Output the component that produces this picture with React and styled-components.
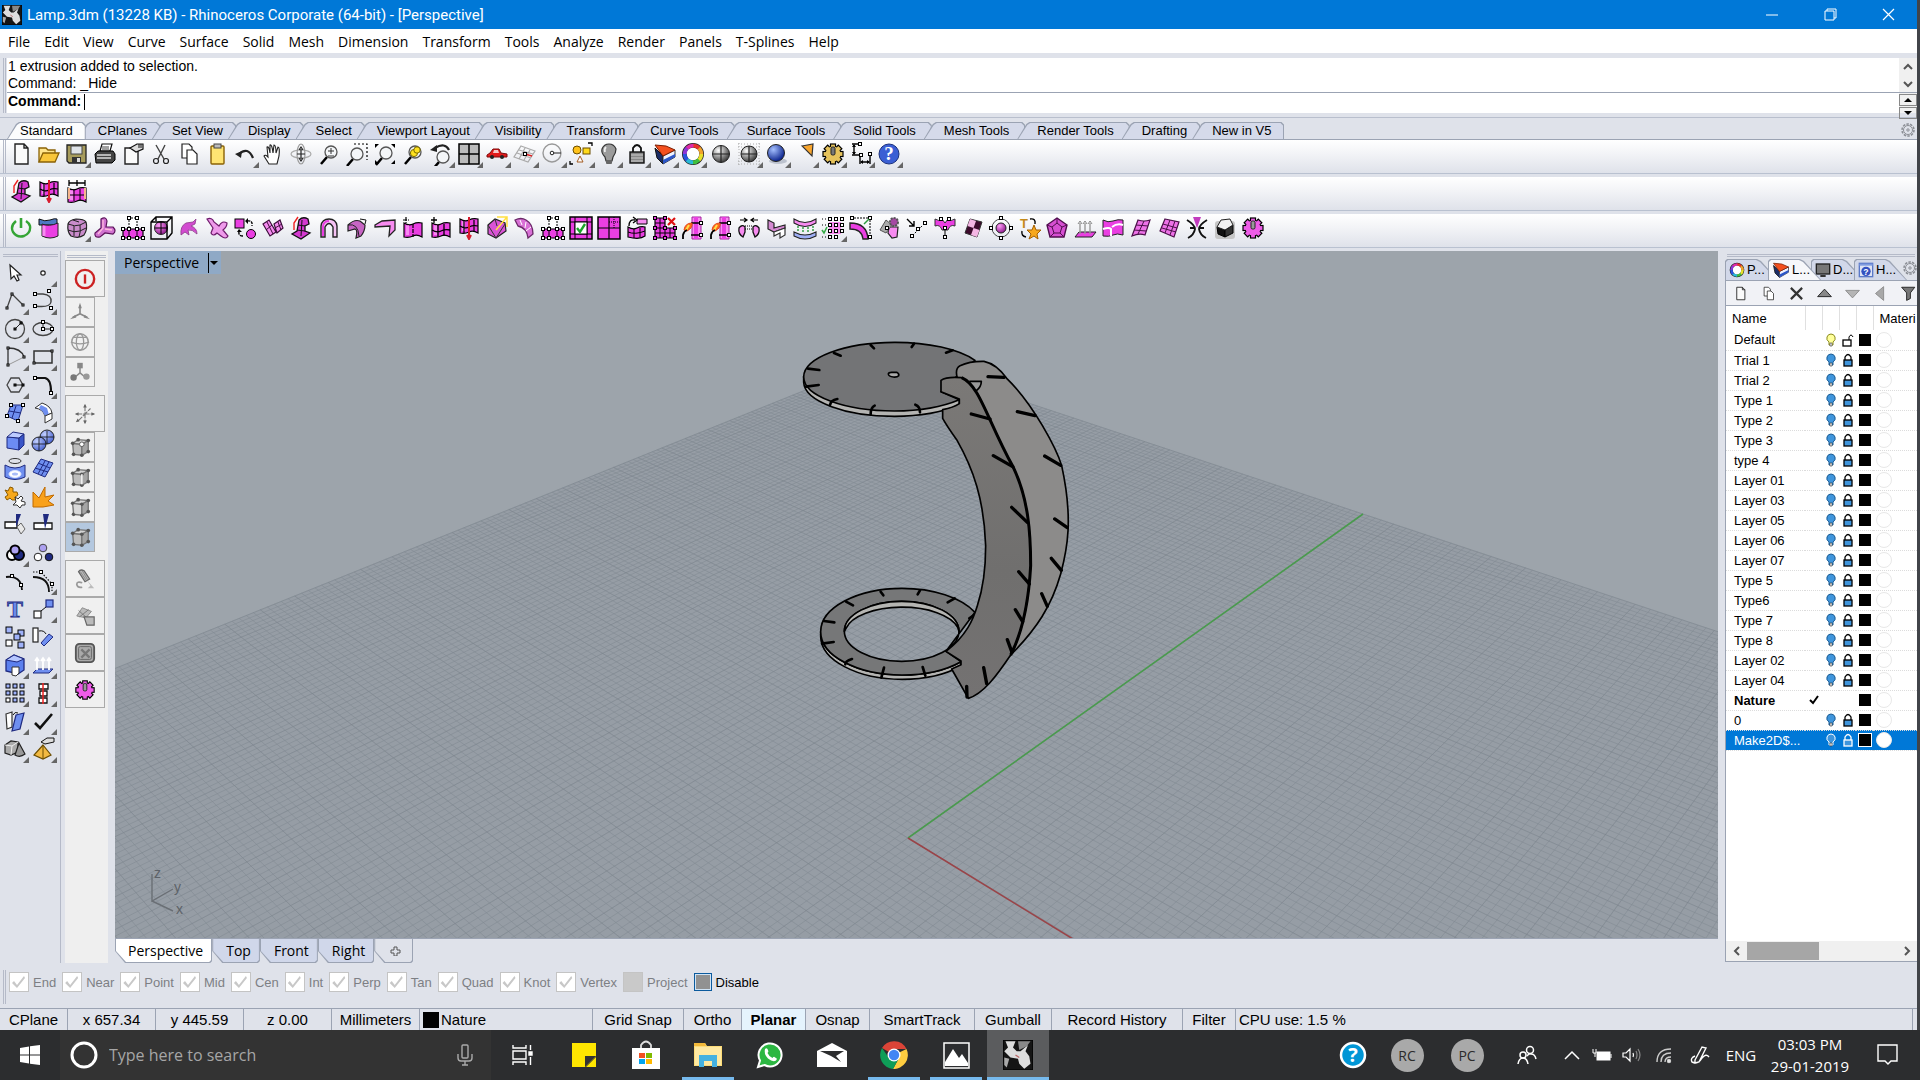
import React, { useState } from 'react';
import styled, { createGlobalStyle, css } from 'styled-components';

const GlobalStyle = createGlobalStyle`
  * { box-sizing: border-box; }
  body {
    margin: 0;
    background: #dfe2ea;
    font-family: "Liberation Sans", Arial, sans-serif;
    font-size: 13px;
    color: #000;
  }
  button, input { font: inherit; color: inherit; }
  button { border: 0; padding: 0; background: none; }
`;

const UI_FONT = '"Open Sans", "Segoe UI", sans-serif';
const LINE = '#9ba3b3';
const M = '#ea3fe2';
const ML = '#f78bf0';
const MD = '#a4219f';
const B = '#6f8ff0';
const BD = '#1f2a80';

/* ---------- icon helpers ---------- */

const dots = (list, fill = '#fff', s = 3) =>
  list.map(([x, y]) => (
    <rect key={x + '-' + y} x={x - s / 2} y={y - s / 2} width={s} height={s} fill={fill} stroke="#000" strokeWidth="1" />
  ));

const Gear = ({ fill, hub = '#999' }) => (
  <>
    {[0, 45, 90, 135].map((a) => (
      <rect key={a} x="9.5" y="2" width="5" height="20" fill={fill} stroke="#000" strokeWidth="1.2" transform={`rotate(${a} 12 12)`} />
    ))}
    <circle cx="12" cy="12" r="7.5" fill={fill} />
    <rect x="10" y="5" width="4" height="8" rx="1.5" fill={hub} stroke="#222" />
  </>
);

const Lens = ({ x = 14, y = 10 }) => (
  <>
    <path d={`M${x - 4} ${y + 5} L${x - 10} ${y + 12}`} stroke="#000" strokeWidth="2.5" />
    <circle cx={x} cy={y} r="6" fill="#f4f6f8" stroke="#555" strokeWidth="1.3" />
  </>
);

const Sphere = ({ x = 12, y = 12, r = 8.5, a = '#fff', b = '#333' }) => {
  const id = 'sp' + x + y + r + a.slice(1);
  return (
    <>
      <radialGradient id={id} cx=".35" cy=".3" r=".75">
        <stop offset="0" stopColor={a} />
        <stop offset="1" stopColor={b} />
      </radialGradient>
      <circle cx={x} cy={y} r={r} fill={`url(#${id})`} stroke="#222" />
    </>
  );
};

const Cage = ({ mark }) => (
  <>
    <path d="M4 8 L14 9 L14 21 L5 20Z" fill="#bdbdbd" stroke="#777" strokeWidth="1.5" />
    <path d="M4 8 L10 4 L21 5 L14 9Z" fill="#d5d5d5" stroke="#777" strokeWidth="1.5" />
    <path d="M14 9 L21 5 L21 17 L14 21Z" fill="#a5a5a5" stroke="#777" strokeWidth="1.5" />
    {[[4, 8], [14, 9], [14, 21], [5, 20], [10, 4], [21, 5], [21, 17]].map(([x, y]) => (
      <circle key={x * y} cx={x} cy={y} r="2" fill="#555" />
    ))}
    {mark === 'vertex' && <circle cx="14" cy="9" r="2.5" fill="#fff" stroke="#555" />}
    {mark === 'edge' && <path d="M14 9 V20" stroke="#eee" strokeWidth="2" />}
    {mark === 'face' && <path d="M5 9 L13 10 V20 L6 19Z" fill="#d8d8d8" />}
  </>
);

const Wall = ({ y = 6 }) => (
  <>
    <path d={`M3 ${y} Q8 ${y + 3} 12 ${y + 1} T21 ${y} V${y + 14} Q16 ${y + 11} 12 ${y + 13} T3 ${y + 14}Z`} fill={M} stroke="#000" strokeWidth="1.2" />
    <path d={`M5 ${y + 2} Q7 ${y + 3} 8 ${y + 2} V${y + 12} L5 ${y + 12}Z`} fill={ML} />
  </>
);

const icons = {
  /* standard toolbar */
  new: <path d="M6 2 H15 L19 6 V22 H6Z M15 2 V6 H19" fill="#fafafa" stroke="#222" strokeWidth="1.4" />,
  open: <><path d="M2 20 V6 H9 L11 8 H18 V11" fill="#ffe48a" stroke="#8a6206" strokeWidth="1.3" /><path d="M2 20 L6 11 H22 L18 20Z" fill="#f9c63a" stroke="#8a6206" strokeWidth="1.3" /></>,
  save: <><path d="M2 3 H21 V21 H4 L2 19Z" fill="#a79c5c" stroke="#222" strokeWidth="1.3" /><rect x="6" y="4" width="11" height="8" fill="#dfe3e8" stroke="#444" /><rect x="7" y="15" width="9" height="6" fill="#333" /><rect x="12" y="16" width="3" height="4" fill="#ddd" /></>,
  print: <><path d="M7 9 L9 2 H19 L17 9Z" fill="#fff" stroke="#111" strokeWidth="1.2" /><path d="M9 5 H16 M9 7 H16" stroke="#444" /><path d="M2 12 L5 9 H20 L22 12 V18 L19 21 H3Z" fill="#444" stroke="#000" /><path d="M4 13 H18 M4 16 H18" stroke="#ddd" strokeWidth="1.4" /></>,
  note: <><path d="M4 6 H17 V22 H4Z" fill="#fafafa" stroke="#222" strokeWidth="1.4" /><path d="M9 6 L16 2 H22 V7 L15 10Z" fill="#ddd" stroke="#111" strokeWidth="1.2" /><path d="M18 2 V6 M20 2 V6" stroke="#111" /></>,
  cut: <><path d="M7 3 L15 17 M16 3 L9 17" stroke="#444" strokeWidth="1.4" /><circle cx="7" cy="19" r="2.5" fill="none" stroke="#222" strokeWidth="1.2" /><circle cx="17" cy="19" r="2.5" fill="none" stroke="#222" strokeWidth="1.2" /></>,
  copy: <><path d="M5 2 H12 L15 5 V16 H5Z" fill="#fff" stroke="#222" strokeWidth="1.2" /><path d="M10 8 H16 L20 12 V22 H10Z" fill="#fff" stroke="#222" strokeWidth="1.2" /></>,
  paste: <><rect x="6" y="4" width="13" height="18" rx="1" fill="#ffe472" stroke="#8a6206" strokeWidth="1.4" /><rect x="9" y="2" width="7" height="4" fill="#bbb" stroke="#444" /></>,
  undo: <><path d="M6 12 Q15 4 20 16" fill="none" stroke="#222" strokeWidth="2.2" /><path d="M2 12 L9 9 L8 16Z" fill="#222" /></>,
  hand: <path d="M8 22 L3 14 Q4 12 7 15 L6 5 Q8 4 9 11 L9 3 Q11 2 12 11 L13 3 Q15 3 15 11 L17 5 Q19 5 18 14 L16 22Z" fill="#fff" stroke="#222" strokeWidth="1.1" />,
  orbit: <><ellipse cx="12" cy="12" rx="10" ry="4" fill="none" stroke="#aaa" strokeWidth="1.2" /><ellipse cx="12" cy="12" rx="4" ry="10" fill="none" stroke="#999" strokeWidth="1.2" /><path d="M12 7 V17 M8 12 H16 M10 8 L12 5 L14 8 M10 16 L12 19 L14 16" stroke="#222" fill="none" strokeWidth="1.2" /></>,
  zoom: <><Lens /><path d="M11 9 H17 M14 6 V12 M11 14 H17" stroke="#333" /></>,
  zoomWin: <><Lens x={12} y={12} /><path d="M9 2 H22 V18" stroke="#000" fill="none" strokeDasharray="2 2" strokeWidth="1.2" /></>,
  zoomExt: <><Lens x={13} y={11} /><path d="M2 6 V2 H6Z M18 2 H22 V6Z M22 18 V22 H18Z M2 18 V22 H6Z" fill="#000" /></>,
  zoomSel: <><Lens /><circle cx="13" cy="11" r="3.6" fill="#ffe21f" stroke="#7a6a00" /><circle cx="16" cy="8" r="3.2" fill="#ffe21f" stroke="#7a6a00" /></>,
  undoView: <><Lens x={14} y={15} /><path d="M6 6 Q16 0 20 8" fill="none" stroke="#222" strokeWidth="2.2" /><path d="M1 8 L8 3 L8 10Z" fill="#222" /></>,
  views: <><rect x="2" y="2" width="20" height="20" fill="#bbb" stroke="#000" strokeWidth="1.5" /><path d="M12 2 V22 M2 12 H22" stroke="#000" strokeWidth="1.5" /></>,
  car: <><path d="M2 13 L5 11 L8 7 H14 L16 11 L22 12 V15 H2Z" fill="#e31b1b" stroke="#7d0b0b" /><path d="M9 8 H13 L14 11 H8Z" fill="#f6c9c9" /><circle cx="7" cy="15" r="2" fill="#222" /><circle cx="17" cy="15" r="2" fill="#222" /></>,
  cplane: <><path d="M8 4 L22 9 L15 20 L1 15Z M6 8 L20 12 M4 11 L18 16 M12 6 L6 17 M17 8 L11 18" fill="none" stroke="#aaa" strokeWidth="1.2" /><path d="M12 12 L19 14" stroke="#d22" strokeWidth="1.5" />{dots([[12, 12]])}</>,
  circleTool: <><circle cx="11" cy="11" r="9" fill="none" stroke="#999" strokeWidth="1.4" /><path d="M12 11 H20" stroke="#222" /><circle cx="11" cy="11" r="1.8" fill="#fff" stroke="#222" /></>,
  shapes: <><circle cx="8" cy="8" r="4" fill="#ffc21a" stroke="#6b4d00" /><rect x="14" y="6" width="7" height="6" fill="#ffd91a" stroke="#6b4d00" /><path d="M8 20 L11 14 L14 20Z" fill="#fff" stroke="#a35b22" /><path d="M19 1 H23 V4 M1 19 V22 H4" stroke="#000" fill="none" strokeWidth="1.3" /></>,
  bulb: <><path d="M8 15 Q4 11 5 7 Q7 2 12 2 Q17 2 19 7 Q19 11 16 15 L15 19 H9Z" fill="#9b9b9b" stroke="#333" strokeWidth="1.2" /><path d="M9 5 Q7 7 8 10" stroke="#eee" strokeWidth="1.8" fill="none" /><rect x="9" y="18" width="6" height="4" rx="1" fill="#666" /></>,
  lock: <><path d="M8 11 V6 Q12 0 16 6 V11" fill="none" stroke="#111" strokeWidth="1.8" /><rect x="5" y="10" width="14" height="11" fill="#888" stroke="#111" strokeWidth="1.4" /><path d="M6 13 H18 M6 16 H18 M6 19 H18" stroke="#ccc" /></>,
  layers: <><path d="M2 6 L10 14 V22 L4 16Z" fill="#1b2c66" stroke="#111" /><path d="M10 14 L22 8 V15 L10 22Z" fill="#eef2ff" stroke="#333" /><path d="M10 18 L22 12 V15 L10 22Z" fill="#2c56c8" /><path d="M2 3 L13 4 L22 8 L10 14Z" fill="#f4501e" stroke="#7d1d00" /></>,
  wheel: <><circle cx="12" cy="12" r="8.5" fill="none" stroke="#222" strokeWidth="5" />{['#e8322a', '#f2a32a', '#e8e02a', '#3fbf3f', '#28b9d8', '#2a52e0', '#8b35d8', '#e02aa8'].map((c, i) => <path key={c} d="M12 3.7 A8.300 8.300 0 0 1 18.2 6.4" fill="none" stroke={c} strokeWidth="3.8" transform={`rotate(${i * 45} 12 12)`} />)}<circle cx="12" cy="12" r="6.2" fill="#fff" /></>,
  sphere: <><Sphere /><path d="M12 3.5 V20.5 M3.5 12 H20.5" stroke="#222" strokeWidth="1.2" /></>,
  sphereGrid: <><path d="M1 2 H23 M1 5 H23 M1 19 H23 M1 22 H23 M2 1 V23 M22 1 V23" stroke="#aaa" strokeDasharray="1 2" /><Sphere r={8} /><path d="M12 4 V20 M4 12 H20" stroke="#222" strokeWidth="1.2" /></>,
  blueSphere: <><ellipse cx="13" cy="19" rx="9" ry="3" fill="#bcc2ce" /><Sphere a="#a4bfff" b="#021a86" x={11} y={11} /></>,
  spot: <path d="M9 4 L20 2 L19 14 Z" fill="#f8a52d" stroke="#333" strokeWidth="1.2" />,
  gearGold: <Gear fill="#e6c35c" hub="#777" />,
  dims: <><path d="M3 2 H11 M3 13 H11 M5 3 V12 M11 13 V22 M21 11 V22 M12 20 H20" stroke="#000" fill="none" strokeWidth="1.4" /><path d="M3 5 L5 2 L7 5Z M3 10 L5 13 L7 10Z M14 18 L11 20 L14 22Z M18 18 L21 20 L18 22Z" fill="#000" />{dots([[11, 2], [12, 13], [21, 12]])}</>,
  help: <><circle cx="12" cy="12" r="10" fill="#3b5fd4" stroke="#1c327e" /><text x="12" y="18" textAnchor="middle" fill="#fff" fontSize="19" fontWeight="700" fontFamily="Liberation Serif, serif">?</text></>,

  /* modelling toolbar */
  power: <><path d="M7 5 Q1 10 4 16 Q8 22 15 20 Q22 17 21 10 Q20 7 17 5" fill="none" stroke="#35a535" strokeWidth="2.4" /><path d="M12 2 V12" stroke="#35a535" strokeWidth="2.6" /></>,
  cylBox: <><path d="M2 3 Q8 6 13 4 T20 3 V9 H2Z" fill="#4d79c4" stroke="#111" /><path d="M5 8 Q12 11 21 7 V20 Q13 24 5 20Z" fill={M} stroke="#222" /><path d="M7 10 V20" stroke={ML} strokeWidth="3" /></>,
  subd: <><path d="M3 8 Q4 4 11 3 Q19 3 21 6 Q23 13 19 19 Q14 23 6 20 Q2 16 3 8Z" fill="#c98ccb" stroke="#222" strokeWidth="1.2" /><path d="M3 8 Q10 11 15 9 L21 6 M15 9 Q16 16 14 21 M9 10 V20 M3 14 Q9 17 15 15 L21 12 M8 4 L14 6" fill="none" stroke="#222" /></>,
  tri: <><path d="M8 3 Q13 0 14 5 L13 11 L20 11 Q24 15 20 18 L12 17 L7 21 Q1 22 2 17 L8 12Z" fill="#d072cf" stroke="#5c125a" strokeWidth="1.2" /><path d="M10 4 L10 12 L5 18 M12 13 L19 14" stroke="#fbd" strokeWidth="1.3" fill="none" /></>,
  extrude: <><path d="M8 12 V2 H16 V12" stroke="#000" fill="#fff" strokeDasharray="2 1" /><path d="M2 13 H22 V22 H2Z" fill={M} stroke="#000" strokeWidth="1.2" /><path d="M8 13 V22 M16 13 V22" stroke="#000" />{dots([[8, 2], [16, 2], [2, 13], [8, 13], [16, 13], [22, 13], [2, 22], [8, 22], [16, 22], [22, 22]])}</>,
  bbox: <><Sphere r={6.5} a="#ff9df8" b="#8a1588" /><path d="M2 6 L7 1 H23 V17 L18 23 H2Z M2 6 H18 V23 M18 6 L23 1 M7 1 V5" fill="none" stroke="#000" strokeWidth="1.4" /><path d="M6 12 H18 M12 6 V18" stroke="#000" /></>,
  curl: <path d="M4 19 Q3 10 9 7 L16 6 L19 3 L18 8 L14 10 Q20 12 20 18 Q15 13 11 14 L12 19 L8 16Z" fill="#d24bd0" stroke="#8b3a89" strokeWidth=".8" />,
  ypipe: <path d="M2 3 Q7 1 9 6 L14 10 Q17 4 22 7 Q22 11 18 14 L23 20 Q21 24 16 20 L12 17 Q8 21 6 17 L8 12Z" fill="#ee9aea" stroke="#6e1a6c" strokeWidth="1.2" />,
  swap: <><rect x="2" y="3" width="9" height="9" fill={M} stroke="#000" /><circle cx="18" cy="18" r="4.5" fill={M} stroke="#000" /><path d="M14 5 Q20 4 19 10 M10 20 Q5 20 6 15" fill="none" stroke="#000" strokeWidth="1.4" strokeDasharray="3 1" /><path d="M15 2 L12 5 L15 8Z M4 16 L6 13 L9 16Z" fill="#000" /></>,
  quads: <><path d="M2 8 L8 4 L15 16 L9 20Z M13 8 L19 4 L22 12 L16 17Z" fill={ML} stroke="#3c0f3b" strokeWidth="1.2" /><path d="M5 14 L11 9 M6 6 L12 18 M17 6 L20 14 M14 12 L21 8" stroke="#3c0f3b" /></>,
  bendL: <><path d="M10 4 Q14 0 19 3 L20 8 L16 10 L16 15 L21 17 L12 23 L3 18 L8 15Z" fill="#d43ad0" stroke="#111" strokeWidth="1.3" /><path d="M13 4 L12 20 M9 9 L16 10 M8 14 L16 15" stroke="#111" /><path d="M5 14 V7 L9 1" fill="none" stroke="#e22" strokeWidth="1.4" /></>,
  arch: <><path d="M4 21 V10 Q5 3 12 3 Q19 3 20 10 V21 H16 V11 Q12 4 8 11 V21Z" fill="#f5c2f3" stroke="#222" strokeWidth="1.4" /><path d="M6 20 V10 Q7 5 12 5" fill="none" stroke={M} strokeWidth="2" /></>,
  bend: <><path d="M3 9 Q9 3 15 5 L20 9 Q20 15 16 20 L11 22 Q13 14 10 13 L3 15Z" fill="#c765c4" stroke="#222" strokeWidth="1.2" /><path d="M3 9 Q13 7 14 20" fill="none" stroke="#222" /><path d="M15 3 L21 4 L20 8" stroke="#111" fill="none" /></>,
  flat: <path d="M2 9 L9 5 L22 4 V14 L16 20 L17 10 L2 11Z" fill={ML} stroke="#222" strokeWidth="1.3" />,
  insert: <><Wall y={7} /><path d="M5 1 V7 M2 4 H8 M12 8 V21" stroke="#000" strokeDasharray="4 1" strokeWidth="1.2" /></>,
  insertEdge: <><Wall y={7} /><path d="M5 1 V7 M2 4 H8 M9 9 V21 M15 8 V20 M3 14 Q8 17 12 15 T21 14" fill="none" stroke="#000" strokeWidth="1.3" /></>,
  slice: <><Wall y={3} /><path d="M7 4 V17 M17 4 V16 M3 10 Q8 13 12 11 T21 10" fill="none" stroke="#000" strokeWidth="1.2" /><path d="M12 1 V23 M10 19 L12 23 L14 19" stroke="#d71c2e" strokeWidth="2" fill="none" /></>,
  crease: <><path d="M3 9 L10 3 L20 7 L21 15 L11 22 L3 18Z" fill="#d953d5" stroke="#222" strokeWidth="1.2" /><path d="M3 9 L11 22 L20 8 M10 3 L12 10" fill="none" stroke="#333" /><path d="M12 1 H22 V11 M11 14 L22 1" fill="none" stroke="#ffe040" strokeWidth="1.5" /></>,
  uncrease: <><path d="M2 4 Q8 1 13 4 Q20 8 20 18 L15 22 Q14 12 5 10Z" fill="#d970d6" stroke="#6a2a68" strokeWidth="1.3" /><path d="M7 4 L9 9 M13 6 L12 12 M18 11 L13 15" stroke="#fff" /></>,
  check: <><rect x="1" y="1" width="22" height="22" fill={M} stroke="#000" strokeWidth="1.5" /><path d="M1 6 H23 M1 18 H23 M6 1 V23 M18 1 V23" stroke="#000" /><rect x="6" y="6" width="12" height="12" fill="#fff" stroke="#000" /><path d="M8 12 L11 16 L16 8" fill="none" stroke="#1ba52b" strokeWidth="2.4" /></>,
  fourBox: <><rect x="1" y="1" width="22" height="22" fill={M} stroke="#000" strokeWidth="1.5" /><path d="M12 1 V23 M1 12 H23" stroke="#000" strokeWidth="1.2" /><path d="M17 1 V12 M12 6 H23" stroke="#000" strokeDasharray="1 1" /></>,
  weld: <><path d="M3 11 Q8 14 12 12 T20 11 V20 Q15 24 3 21Z" fill={M} stroke="#000" strokeWidth="1.2" /><path d="M3 16 Q10 19 20 15 M9 13 V22 M15 12 V21" fill="none" stroke="#000" /><path d="M12 3 H22 V8 H12Z" fill={ML} stroke="#000" /><path d="M4 10 Q4 3 10 4 M8 1 L12 4 L8 7" fill="none" stroke="#000" strokeWidth="1.3" /></>,
  remove: <><path d="M2 2 H12 V12 H22 V22 H2Z" fill={M} stroke="#000" strokeWidth="1.2" /><path d="M7 2 V22 M2 7 H12 M2 12 H12 V22 M17 12 V22 M2 17 H22" stroke="#000" fill="none" />{dots([[2, 2], [12, 2], [2, 12], [12, 12], [22, 12], [2, 22], [12, 22], [22, 22]], M)}<path d="M15 2 L22 9 M22 2 L15 9" stroke="#d11" strokeWidth="2.2" /></>,
  flame: <><path d="M11 1 H20 V23 H11Z" fill={ML} stroke={MD} /><path d="M15 1 V23" stroke={M} strokeWidth="4" /><path d="M10 7 H21 M10 19 H21" stroke="#000" strokeWidth="1.6" />{dots([[20, 7], [20, 19]])}<path d="M3 14 Q4 7 11 7 Q12 12 6 15Z" fill="#ff6a1a" stroke="#e4481b" /><path d="M8 9 L5 14" stroke="#ffe04a" strokeWidth="2" /><path d="M2 23 V19 Q3 15 6 14" stroke="#000" fill="none" strokeWidth="1.8" /></>,
  bridge: <><path d="M2 12 Q5 8 8 11 V16 L6 21 Q1 18 2 12Z M22 12 Q19 8 16 11 V16 L18 21 Q23 18 22 12Z" fill={ML} stroke="#111" strokeWidth="1.3" /><path d="M8 10 H16 M8 13 H16" stroke="#000" strokeDasharray="1 1" /><path d="M3 4 H9 M7 2 L10 4 L7 6 M21 4 H15 M17 2 L14 4 L17 6" fill="none" stroke="#000" strokeWidth="1.2" /></>,
  chair: <><path d="M3 4 L9 7 V12 L20 9 L20 12 L9 16 L3 13Z" fill="#d58ad2" stroke="#222" strokeWidth="1.2" /><path d="M9 16 L20 12 V19 L15 22 V17 L9 20Z" fill="#fff" stroke="#333" strokeWidth="1.2" /></>,
  merge: <><path d="M1 3 Q12 10 23 3 V7 Q12 14 1 7Z" fill={ML} stroke="#222" strokeWidth="1.1" /><path d="M1 16 Q12 22 23 16 V20 Q12 26 1 20Z" fill="#9fb0f5" stroke="#222" strokeWidth="1.1" /><path d="M5 10 V16 M10 11 V17 M15 11 V17 M20 10 V16" stroke="#2a9a3b" strokeWidth="1.4" strokeDasharray="2 1" /></>,
  dotGrid: <><rect x="8" y="6" width="12" height="12" fill={ML} />{dots([[9, 3], [15, 3], [21, 3], [9, 9], [15, 9], [21, 9], [9, 15], [15, 15], [21, 15], [9, 21], [15, 21]])}<path d="M1 3 H5 M1 9 H5 M1 21 H5" stroke="#000" strokeDasharray="1 2" /><path d="M1 14 L3 17 L6 11" fill="none" stroke="#3a4" strokeWidth="1.6" /></>,
  quarter: <><path d="M1 7 Q18 7 19 23 H14 Q13 13 1 13Z" fill={M} stroke="#222" strokeWidth="1.4" /><path d="M2 2 H21 V21" stroke="#000" fill="none" strokeDasharray="2 1" />{dots([[3, 2], [21, 2], [21, 21]])}<path d="M15 8 L20 3" stroke="#2a9a3b" strokeWidth="1.4" /></>,
  gearQuad: <><path d="M12 11 H21 L20 21 L15 22 L11 17Z" fill={ML} stroke="#222" strokeWidth="1.2" /><path d="M3 14 L9 4 L15 9 L9 17Z" fill="#aaa" stroke="#555" /><circle cx="17" cy="6" r="4" fill="#a648a4" stroke="#555" strokeDasharray="2 1" strokeWidth="2" />{dots([[10, 12]])}</>,
  arrowPts: <><path d="M2 3 L9 10 M9 5 V10 H4" stroke="#000" fill="none" strokeWidth="1.4" /><path d="M7 20 L20 7" stroke="#000" strokeDasharray="2 2" />{dots([[20, 7], [13, 13], [7, 20]])}</>,
  symm: <><path d="M2 3 Q6 6 9 3 L12 7 L15 3 Q18 6 22 3 V10 Q17 8 15 14 H9 Q7 8 2 10Z" fill={M} stroke="#333" /><path d="M12 14 V22" stroke="#000" />{dots([[8, 3], [16, 3], [12, 12], [12, 21]])}</>,
  checker: <><path d="M9 3 L21 6 L16 21 L4 17Z" fill="#3d0b2c" stroke="#333" /><path d="M9 3 L15 5 L12.500 12 L6.500 10Z M18.500 14 L16 21 L10 19 L12.500 12Z" fill="#f4b6e3" /></>,
  spherePts: <><circle cx="12" cy="12" r="9" fill="none" stroke="#444" /><Sphere r={5} a="#ff9df8" b="#8a1588" />{dots([[12, 2], [12, 22], [2, 12], [22, 12]])}</>,
  tStar: <><text x="7" y="12" textAnchor="middle" fill="#c48a1a" fontSize="13" fontWeight="700">T</text><path d="M17 9 L19 14 L24 14 L20 18 L21 23 L17 20 L12 23 L14 18 L10 14 L15 14Z" fill="#f7a81d" stroke="#a35f00" /><path d="M13 3 Q19 2 18 8 M9 21 Q4 20 5 15" stroke="#000" fill="none" strokeWidth="1.4" /></>,
  penta: <><path d="M12 2 L22 9 L19 21 H5 L2 9Z" fill="#d64fd2" stroke="#500e4e" strokeWidth="1.4" /><path d="M12 7 L17 11 L15 17 H9 L7 11Z M12 2 V7 M22 9 L17 11 M19 21 L15 17 M5 21 L9 17 M2 9 L7 11" fill="none" stroke="#500e4e" /></>,
  arrowsUp: <><path d="M2 21 L6 16 H23 L19 21Z" fill={M} stroke="#222" /><path d="M7 18 V7 M12 18 V7 M17 18 V7" stroke="#999" strokeWidth="1.4" /><path d="M5 8 L7 5 L9 8 M10 8 L12 5 L14 8 M15 8 L17 5 L19 8" stroke="#888" fill="none" /></>,
  patch: <><path d="M2 4 Q7 7 12 5 T22 4 V19 Q16 17 12 19 T2 20Z" fill={M} stroke="#222" /><path d="M2 13 Q8 11 10 13 V20 M22 9 Q16 7 11 11" fill="none" stroke="#fff" strokeWidth="2" /></>,
  mesh: <><path d="M9 4 Q15 6 21 4 L16 19 Q10 17 3 20Z" fill="#ee72e8" stroke="#4a1048" strokeWidth="1.2" /><path d="M15 5 L9 18 M7 9 L19 10 M5 14 L17 15" stroke="#4a1048" /></>,
  mesh2: <><path d="M8 3 L22 6 L17 21 L3 15Z" fill="#ee72e8" stroke="#4a1048" strokeWidth="1.2" /><path d="M13 4 L8 17 M18 5 L13 19 M6 8 L20 12 M5 12 L19 16" stroke="#4a1048" /></>,
  pinch: <><path d="M8 1 H16 L12 12Z" fill="#c23cbe" /><path d="M2 4 Q10 9 10 13 Q9 19 3 22 M22 4 Q14 9 14 13 Q15 19 21 22 M5 12 H10 M19 12 H14" fill="none" stroke="#111" strokeWidth="1.8" /></>,
  gem: <><rect x="2" y="5" width="20" height="18" rx="3" fill="#c6c6c6" /><path d="M4 11 L12 14 V21 L5 18Z" fill="#111" stroke="#000" /><path d="M12 14 L20 9 V17 L12 21Z" fill="#333" stroke="#000" /><path d="M4 11 L8 4 L17 3 L20 9 L12 14Z" fill="#f2f2f2" stroke="#222" /></>,
  gearPink: <Gear fill="#ee5ce8" />,
  wallDims: <><Wall y={9} /><path d="M9 10 V22 M15 10 V22 M3 16 H21" stroke="#000" /><path d="M4 9 V20 M20 9 V20" stroke="#f5b58d" strokeWidth="2" /><path d="M4 4 H20 M4 1 V7 M12 1 V7 M20 1 V7" stroke="#000" strokeWidth="1.3" /></>,

  /* main side bar */
  cursor: <path d="M7 4 L8 18 L11 15 L14 20 L16 19 L14 14 L18 14Z" fill="#fff" stroke="#222" strokeWidth="1.2" />,
  point: <circle cx="12" cy="12" r="2.2" fill="#fff" stroke="#222" strokeWidth="1.2" />,
  polyline: <><path d="M4 19 L9 5 L20 16" fill="none" stroke="#444" strokeWidth="1.3" />{dots([[4, 19], [9, 5], [20, 16]], '#fff', 2)}</>,
  curve: <><path d="M4 5 H12 Q21 6 20 13 Q19 19 4 17" fill="none" stroke="#444" strokeWidth="1.4" />{dots([[4, 5], [18, 2], [4, 17], [20, 19]])}</>,
  circle: <><circle cx="12" cy="12" r="9.500" fill="none" stroke="#444" strokeWidth="1.3" /><path d="M12 12 L18 6" stroke="#222" />{dots([[12, 12], [18, 6]], '#444', 2)}</>,
  ellipse: <><ellipse cx="12" cy="12" rx="10" ry="6.500" fill="none" stroke="#444" strokeWidth="1.3" /><path d="M12 6 V12 H21" stroke="#222" fill="none" />{dots([[12, 5], [12, 12], [21, 12]])}</>,
  arc: <><path d="M5 20 V3 Q18 3 21 12" fill="none" stroke="#333" strokeWidth="1.3" /><path d="M21 12L5 20" stroke="#999" />{dots([[5, 3], [21, 12], [5, 20]], '#fff', 2)}</>,
  rect: <><rect x="3" y="6" width="18" height="12" fill="none" stroke="#333" strokeWidth="1.5" />{dots([[21, 6], [3, 18]], '#fff', 2)}</>,
  polygon: <><path d="M4 12 L8 5 H16 L20 12 L16 19 H8Z" fill="none" stroke="#444" strokeWidth="1.3" /><path d="M12 12 H19" stroke="#222" />{dots([[12, 12], [20, 12]], '#444', 2)}</>,
  fillet: <><path d="M4 5 H14 Q20 6 20 19" fill="none" stroke="#111" strokeWidth="2.2" />{dots([[4, 5], [20, 20]])}</>,
  srfPts: <><path d="M8 4 L20 4 L15 20 L4 15Z" fill={B} stroke={BD} /><path d="M13 5 L9 17 M6 10 L18 12" stroke={BD} />{dots([[8, 4], [20, 4], [15, 20], [4, 15]])}</>,
  srfBend: <><path d="M4 7 L11 2 Q20 5 21 12 L14 15 Q12 8 4 7Z" fill="#fff" stroke="#333" /><path d="M10 4 L16 7 L18 14 L14 15 Q12 10 8 7Z" fill={B} /><path d="M14 15 L21 12 V18 L14 22Z" fill="#fff" stroke="#333" /></>,
  box: <><path d="M4 8 L16 9 V21 L4 19Z" fill="#6c8cf4" stroke={BD} /><path d="M4 8 L10 3 L21 5 L16 9Z" fill="#bccbff" stroke={BD} /><path d="M16 9 L21 5 V16 L16 21Z" fill="#3a55c8" stroke={BD} /></>,
  balls: <><Sphere x={16} y={8} r={7} a="#c4d1ff" b="#4560cf" /><Sphere x={8} y={15} r={7} a="#c4d1ff" b="#4560cf" /><path d="M1 15 H15 M8 8 V22 M16 2 V15 M9 8 H23" stroke="#111" strokeWidth=".8" /></>,
  tube: <><ellipse cx="12" cy="4" rx="6" ry="2.500" fill="none" stroke="#333" /><path d="M2 8 Q12 14 22 8 V20 Q12 25 2 20Z" fill={B} stroke={BD} /><ellipse cx="12" cy="17" rx="6" ry="3.500" fill="#fff" stroke="#dce4ff" /><ellipse cx="12" cy="17" rx="3" ry="1.500" fill="#a9bcf8" /></>,
  meshBlue: <><path d="M10 2 L22 6 L14 20 L2 15Z" fill={B} stroke={BD} /><path d="M14 4 L7 17 M18 5 L10 19 M7 6 L19 11 M4 11 L17 15" stroke={BD} /></>,
  puzzle: <><path d="M2 5 L5 6 L7 2 L10 3 L10 7 L14 7 L15 10 L12 12 L13 15 L9 15 L7 13 L4 15 L2 12 L5 10Z" fill="#f6a81c" stroke="#8a5a00" /><path d="M12 12 L15 14 L18 11 L20 13 L18 16 L22 17 L22 20 L19 20 L17 23 L14 20 L10 20 L13 17Z" fill="#fff" stroke="#333" /></>,
  explode: <path d="M2 22 V7 L8 13 L14 2 L14 12 L23 10 L17 16 L23 20 L12 22Z" fill="#f9a11b" stroke="#c06a00" />,
  trim: <><path d="M2 9 H14 V15 H2Z" fill="#fff" stroke="#111" strokeWidth="1.3" /><path d="M13 1 H18 L13 14Z" fill={BD} /><path d="M14 14 L18 10 L22 16 L18 21Z" fill="#e8e8e8" stroke="#666" /></>,
  split: <><path d="M3 10 H21 V16 H3Z" fill="#fff" stroke="#111" strokeWidth="1.3" /><path d="M12 1 H18 L14 16Z" fill={BD} /></>,
  rings: <><circle cx="9" cy="14" r="5" fill="#fff" stroke="#000" strokeWidth="2" /><circle cx="16" cy="14" r="5" fill={BD} stroke="#000" strokeWidth="2" /><circle cx="12" cy="9" r="4.500" fill="#aca0f0" stroke="#000" strokeWidth="2" /></>,
  ringsApart: <><circle cx="12" cy="7" r="3.800" fill="#aca0f0" stroke="#444" /><circle cx="7" cy="16" r="3.800" fill="#fff" stroke="#222" /><circle cx="18" cy="16" r="3.800" fill={BD} stroke="#111" /></>,
  curvePt: <><path d="M3 8 Q18 6 19 21" fill="none" stroke="#111" strokeWidth="1.800" />{dots([[9, 7], [18, 16]])}</>,
  curveEdit: <><path d="M2 8 Q18 8 18 23" fill="none" stroke="#111" strokeWidth="1.800" /><path d="M2 3 H10 L21 15 V22" fill="none" stroke="#111" strokeDasharray="1.500 1.500" strokeWidth="1.200" />{dots([[10, 3], [21, 15]])}</>,
  text: <text x="12" y="20" textAnchor="middle" fill="#6b8bea" stroke={BD} strokeWidth=".800" fontSize="24" fontWeight="700" fontFamily="Liberation Serif, serif">T</text>,
  scale: <><rect x="3" y="14" width="7" height="7" fill="#fff" stroke="#222" strokeWidth="1.200" /><rect x="15" y="3" width="7" height="7" fill={B} stroke={BD} strokeWidth="1.200" /><path d="M10 14 L15 10" stroke="#111" /></>,
  blocks: <>{dots([[6, 5], [18, 8], [14, 12], [18, 20]], '#9fb2fa', 6)}{dots([[6, 18]], '#fff', 6)}</>,
  rotate: <><rect x="2" y="3" width="5" height="14" fill="#fff" stroke="#222" strokeWidth="1.200" /><path d="M18 9 L22 12 L13 21 L10 18Z" fill={B} stroke={BD} /><path d="M8 6 Q13 5 15 9" fill="none" stroke="#111" /></>,
  boolean: <><path d="M3 7 L11 2 L21 6 V17 L15 21 L3 18Z" fill="#5b80ee" stroke={BD} strokeWidth="1.300" /><path d="M3 7 L14 9 L21 6 L11 2Z" fill="#b5c6ff" stroke={BD} /><path d="M9 22 V14 H16 V20 L13 23Z" fill="#fff" stroke="#333" /></>,
  arrowsBlue: <><path d="M2 20 L6 16 H22 L18 20Z" fill={B} stroke={BD} /><path d="M6 17 V7 M12 17 V7 M18 17 V7 M4 8 L6 5 L8 8 M10 8 L12 5 L14 8 M16 8 L18 5 L20 8" stroke="#fff" fill="none" strokeWidth="1.800" /></>,
  array: <>{dots([[5, 5], [12, 5], [19, 5], [5, 12], [12, 12], [19, 12], [12, 19], [19, 19]], '#9fb2fa', 4)}{dots([[5, 19]], '#fff', 4)}</>,
  align: <><path d="M8 3 H17 V8 H8Z M9 10 H16 V15 H9Z M8 17 H16 V22 H8Z" fill="#fff" stroke="#111" strokeWidth="1.300" /><path d="M12 2 V23" stroke="#e22" strokeWidth="1.500" /></>,
  flip: <><path d="M3 5 L9 3 V18 L4 20Z" fill="#fff" stroke="#333" strokeWidth="1.200" /><path d="M13 6 L21 4 L17 20 L9 22Z" fill={B} stroke={BD} strokeWidth="1.200" /><path d="M10 6 Q12 2 15 4" fill="none" stroke="#111" /></>,
  tick: <path d="M4 14 L9 19 L21 5" fill="none" stroke="#111" strokeWidth="2.600" />,
  solids: <><path d="M2 8 L8 4 L15 5 V15 L8 18 L2 16Z" fill="#aaa" stroke="#222" strokeWidth="1.200" /><path d="M2 8L9 9L15 5M9 9L8 18" stroke="#eee" fill="none" /><path d="M16 6 L22 17 Q17 21 12 18Z" fill="#999" stroke="#222" strokeWidth="1.200" /></>,
  pyramid: <><path d="M12 8 L20 18 L12 22 L3 18Z" fill="#f2b941" stroke="#6b4d00" strokeWidth="1.200" /><path d="M12 8 L12 22" stroke="#6b4d00" /><path d="M10 5 L16 1 H23 V5 L14 7Z" fill="#ddd" stroke="#111" /></>,

  /* gray side bar */
  redPower: <><circle cx="12" cy="12" r="10" fill="none" stroke="#c22" strokeWidth="2.600" /><path d="M12 7 V17" stroke="#c22" strokeWidth="2.600" /></>,
  axes: <><path d="M12 14 V5 M12 14 L4 18 M12 14 L20 18" stroke="#888" strokeWidth="1.800" /><path d="M10 8 L12 2 L14 8Z M7 15 L1 20 L8 18Z M17 15 L23 20 L16 18Z" fill="#888" /></>,
  globe: <><circle cx="12" cy="12" r="9" fill="none" stroke="#999" strokeWidth="1.600" /><ellipse cx="12" cy="12" rx="4" ry="9" fill="none" stroke="#999" strokeWidth="1.400" /><path d="M2 12 Q12 16 22 12 M4 7 H20" fill="none" stroke="#999" strokeWidth="1.400" /></>,
  joints: <><path d="M12 13 V6 M12 13 L6 18 M12 13 L18 18" stroke="#888" strokeWidth="1.600" /><rect x="9" y="2" width="6" height="6" fill="#888" /><circle cx="5" cy="18" r="3.500" fill="#777" /><circle cx="19" cy="17" r="3.500" fill="#999" /></>,
  star: <><path d="M12 2 V22 M2 12 H22 M4 20 L18 6" stroke="#777" strokeWidth="1.200" strokeDasharray="7 1" /><path d="M12 1 L14 5 H10Z M12 23 L14 19 H10Z M1 12 L5 10 V14Z M23 12 L19 10 V14Z M2 21 L6 20 L4 17Z" fill="#666" /></>,
  cage1: <Cage mark="vertex" />, cage2: <Cage mark="edge" />, cage3: <Cage mark="face" />, cage4: <Cage />,
  brush: <><path d="M5 4 Q7 1 11 3 L17 12 L12 15Z" fill="#bbb" stroke="#666" strokeWidth="1.400" /><path d="M7 4 L13 13 M9 3 L15 13" stroke="#888" /><path d="M14 13 L22 22 H15 L18 19Z" fill="#bbb" /><path d="M9 16 Q3 14 3 18 Q4 22 9 21" fill="none" stroke="#999" strokeWidth="1.800" /></>,
  grayQuad: <><path d="M3 12 L9 3 L19 7 L13 14Z" fill="#bbb" stroke="#888" /><path d="M5 6 L14 14 M6 13 L16 5" stroke="#777" /><path d="M11 13 L22 13 V22 H14Z" fill="#bbb" stroke="#666" strokeWidth="1.300" /></>,
  boxX: <><rect x="2" y="2" width="20" height="20" rx="4" fill="#aaa" stroke="#555" strokeWidth="2" /><rect x="5" y="5" width="14" height="14" rx="2" fill="none" stroke="#666" /><path d="M8 8 L17 17 M17 8 L8 17" stroke="#777" strokeWidth="2.500" /></>,

  /* layer panel */
  monitor: <><rect x="2" y="3" width="20" height="15" fill="#777" stroke="#222" strokeWidth="2" /><path d="M8 21H16" stroke="#333" strokeWidth="3" /></>,
  helpBox: <><rect x="2" y="2" width="20" height="20" fill="#dfe4f4" stroke="#5a78c8" strokeWidth="2" /><path d="M2 4H22" stroke="#7f9be0" strokeWidth="3" /><circle cx="12" cy="14" r="7" fill="#3350c0" /><text x="12" y="19" textAnchor="middle" fill="#fff" fontSize="13" fontWeight="700">?</text></>,
  cross: <path d="M3 3L21 21M21 3L3 21" stroke="#333" strokeWidth="3.500" />,
  up: <path d="M12 5L23 17H1Z" fill="#888" stroke="#222" strokeWidth="1.500" />,
  down: <path d="M12 19L23 7H1Z" fill="#b5b5b5" stroke="#8d8d8d" strokeWidth="1.500" />,
  left: <path d="M4 12L17 1V23Z" fill="#a8a8a8" stroke="#8d8d8d" strokeWidth="1.500" />,
  funnel: <path d="M1 2H22L15 11V20L9 23V11Z" fill="#777" stroke="#222" strokeWidth="1.500" />,
};

const Glyph = ({ name, size = 24 }) => (
  <svg width={size} height={size} viewBox="0 0 24 24" aria-hidden="true">{icons[name]}</svg>
);

/* ---------- window ---------- */

const Desktop = styled.div`
  min-height: 100vh;
  display: flex;
  flex-direction: column;
`;

const Window = styled.div`
  flex: 1;
  display: flex;
  flex-direction: column;
  border-right: 3px solid #414449;
  background: #dfe2ea;
`;

const TitleBar = styled.header`
  height: 29px;
  display: flex;
  align-items: center;
  background: #0078d7;
  color: #fff;
  padding-left: 2px;

  h1 {
    flex: 1;
    margin: 0 0 0 5px;
    font: 400 15px/20px Roboto, "Segoe UI", sans-serif;
  }
`;

const CaptionButton = styled.button`
  width: 58px;
  height: 29px;
  display: grid;
  place-items: center;
`;

const MenuBar = styled.nav`
  height: 24px;
  display: flex;
  align-items: center;
  background: #fff;
  font: 14px/20px ${UI_FONT};
  padding: 1px 0 0 8px;
  gap: 14px;
`;

const CommandBar = styled.section`
  display: flex;
  margin-top: 5px;
  padding-left: 3px;
  padding-bottom: 4px;
  border-bottom: 1px solid #b9bfcd;
`;

const Grip = styled.div`
  flex: none;
  ${(p) => p.$flat
    ? css`height: 3px; border-top: 1px solid #b5bac8; border-bottom: 1px solid #b5bac8; margin: 0 2px;`
    : css`width: 3px; border-left: 1px solid #b5bac8; border-right: 1px solid #b5bac8; margin-right: 1px;`}
`;

const CommandText = styled.div`
  flex: 1;
  background: #fff;
  font-size: 14px;
  line-height: 17px;
`;

const History = styled.div`
  display: flex;
  border-bottom: 1px solid ${LINE};
  p { margin: 0; padding-left: 1px; flex: 1; white-space: pre-line; }
`;

const ScrollButtons = styled.div`
  width: 18px;
  display: flex;
  flex-direction: column;
  background: #f0f0f0;
  button {
    flex: 1;
    display: grid;
    place-items: center;
    ${(p) => p.$boxed && 'border: 1px solid #888; margin: 1px 0 0;'}
  }
`;

const Prompt = styled.div`
  display: flex;
  height: 20px;
  label { font-weight: 700; padding: 0 3px 0 1px; }
  input {
    flex: 1;
    border: 0;
    border-left: 1px solid #000;
    outline: 0;
    padding: 0 2px;
    margin: 1px 0 3px;
  }
`;

const ToolTabs = styled.div`
  display: flex;
  align-items: flex-end;
  height: 22px;
  padding: 0 2px 0 7px;
  border-bottom: 1px solid ${LINE};
`;

const ToolTab = styled.button`
  position: relative;
  isolation: isolate;
  height: 17px;
  padding: 0 ${(p) => (p.$roomy ? 16 : 13)}px 0 20px;
  margin-left: -8px;
  line-height: 17px;
  white-space: nowrap;
  z-index: ${(p) => (p.$active ? 1 : 0)};
  &:first-child { margin-left: 0; padding-left: 13px; }
  &::before, &::after {
    content: '';
    position: absolute;
    z-index: -2;
    inset: 0;
    background: ${LINE};
    clip-path: polygon(0 100%, 9px 2px, 12px 0, calc(100% - 3px) 0, 100% 3px, 100% 100%);
  }
  &::after {
    z-index: -1;
    inset: 1px 1px 0 1px;
    background: ${(p) => (p.$active ? '#fbfcfd' : '#d5daea')};
  }
`;

const Spacer = styled.div`
  flex: 1;
`;

const ToolRow = styled.div`
  display: flex;
  height: ${(p) => p.$height || 34}px;
  padding-left: 3px;
  margin-bottom: 3px;
  border-bottom: 1px solid #b9c1d0;
  background: linear-gradient(#ffffff, #f3f4f7 40%, #dfe2ea);
`;

const ToolButton = styled.button`
  position: relative;
  flex: none;
  width: 28px;
  height: ${(p) => (p.$small ? 24 : 28)}px;
  display: grid;
  place-items: center;
  svg { display: block; }
  ${(p) => p.$flyout && css`
    &::after {
      content: '';
      position: absolute;
      right: 0;
      bottom: 0;
      border: 3px solid transparent;
      border-right-color: #666;
      border-bottom-color: #666;
    }
  `}
`;

const Work = styled.div`
  flex: 1;
  display: flex;
`;

const SideBar = styled.div`
  width: 61px;
  flex: none;
  padding: 3px 0 0 1px;
  border-right: 1px solid #b5bac8;
`;

const SideGrid = styled.div`
  display: grid;
  grid-template-columns: 28px 28px;
  grid-auto-rows: 28px;
  margin-top: 2px;
`;

const TsBar = styled.div`
  width: 43px;
  flex: none;
  margin: 0 7px 0 4px;
  padding-top: 4px;
  background: #efefef;
`;

const TsGroup = styled.div`
  display: flex;
  flex-direction: column;
  margin: 2px 0 8px;
`;

const TsButton = styled.button`
  width: ${(p) => (p.$wide ? 40 : 30)}px;
  height: ${(p) => (p.$wide ? 37 : 30)}px;
  display: grid;
  place-items: center;
  border: 1px solid #aaa;
  background: ${(p) => (p.$active ? '#b4c8df' : '#f0f0f0')};
`;

const Center = styled.main`
  flex: 1;
  min-width: 0;
  display: flex;
  flex-direction: column;
`;

const Viewport = styled.div`
  position: relative;
  flex: 1;
  min-height: 687px;
  background: #9da4ab;
  overflow: hidden;
  border-bottom: 1px solid ${LINE};
  > svg { position: absolute; inset: 0; width: 100%; height: 100%; }
`;

const ViewportTitle = styled.button`
  position: absolute;
  left: 0;
  top: 0;
  height: 23px;
  display: flex;
  align-items: center;
  background: #8fa9c6;
  font: 14px/20px ${UI_FONT};
  padding: 0 2px 0 9px;
  span { border-right: 1px solid #000; padding-right: 9px; }
`;

const ViewTabs = styled.div`
  display: flex;
  height: 24px;
`;

const ViewTab = styled.button`
  position: relative;
  isolation: isolate;
  padding: 0 ${(p) => (p.$plain ? 11 : 9)}px 0 13px;
  font: 14px/24px ${UI_FONT};
  & + & { padding-left: 14px; }
  &::before, &::after {
    content: '';
    position: absolute;
    z-index: -2;
    inset: 0;
    background: ${LINE};
    clip-path: polygon(0 0, 100% 0, 100% calc(100% - 2px), calc(100% - 2px) 100%, 10px 100%, 0 12px);
  }
  &::after {
    z-index: -1;
    inset: 0 1px 1px 1px;
    background: ${(p) => (p.$active ? '#fff' : p.$plain ? '#dfe2ea' : '#d0d7ea')};
  }
`;

const Panel = styled.aside`
  width: 192px;
  flex: none;
  margin-left: 7px;
  padding: 3px 0 1px;
  display: flex;
  flex-direction: column;
  overflow: hidden;
`;

const PanelTabs = styled.div`
  display: flex;
  height: 22px;
  margin-top: 2px;
  border-bottom: 1px solid ${LINE};
`;

const PanelTab = styled.button`
  position: relative;
  isolation: isolate;
  flex: none;
  width: 53px;
  margin-right: -10px;
  padding-left: 4px;
  display: flex;
  align-items: center;
  gap: 2px;
  z-index: ${(p) => (p.$active ? 2 : 0)};
  &::before, &::after {
    content: '';
    position: absolute;
    z-index: -2;
    inset: 0;
    background: ${LINE};
    clip-path: polygon(0 2px, 2px 0, calc(100% - 21px) 0, calc(100% - 17px) 2px, 100% 100%, 0 100%);
  }
  &::after {
    z-index: -1;
    inset: 1px 1px 0 1px;
    background: ${(p) => (p.$active ? '#f6f7fa' : '#d2d8e9')};
  }
`;

const PanelTools = styled.div`
  display: flex;
  height: 25px;
  background: #f1f2f6;
  border: 1px solid ${LINE};
  border-width: 0 0 1px 1px;
`;

const LayerBox = styled.div`
  flex: 1;
  display: flex;
  flex-direction: column;
  justify-content: space-between;
  background: #fff;
  border: 1px solid ${LINE};
  border-width: 0 0 1px 1px;
`;

const LayerTable = styled.table`
  width: 100%;
  table-layout: fixed;
  border-collapse: collapse;
  th {
    height: 24px;
    padding: 0 0 0 6px;
    text-align: left;
    font-weight: 400;
    border-left: 1px solid #e0e0e0;
    white-space: nowrap;
  }
  th:first-child { border-left: 0; }
  td { padding: 0; text-align: center; }
  td:first-child { text-align: left; padding-left: 8px; white-space: nowrap; }
  svg { display: block; margin: 0 auto; }
`;

const Col = styled.col`
  width: ${(p) => p.$w}px;
`;

const LayerRow = styled.tr`
  height: 20px;
  border-bottom: 1px dotted #dcdcdc;
  font-weight: ${(p) => (p.$current ? 700 : 400)};
  ${(p) => p.$selected && 'background: #0078d7; color: #fff;'}
`;

const Swatch = styled.span`
  display: block;
  width: 12px;
  height: 12px;
  margin: 0 auto;
  background: #000;
  outline: ${(p) => (p.$outlined ? '1px solid #fff' : 0)};
`;

const Ball = styled.span`
  display: block;
  width: 16px;
  height: 16px;
  margin-left: 3px;
  border-radius: 50%;
  border: 1px solid #e8e8e8;
  background: #fff;
`;

const ScrollBar = styled.div`
  display: flex;
  align-items: center;
  height: 20px;
  background: #f0f0f0;
  button { width: 21px; height: 20px; display: grid; place-items: center; }
`;

const Thumb = styled.div`
  width: 72px;
  height: 18px;
  background: #a6a6a6;
`;

const SnapBar = styled.div`
  display: flex;
  height: 45px;
  padding: 7px 0 4px 3px;
`;

const SnapList = styled.div`
  display: flex;
  gap: 6px;
  padding-left: 2px;
`;

const Snap = styled.label`
  display: flex;
  align-items: center;
  gap: 4px;
  height: 22px;
  margin-top: 1px;
  color: ${(p) => (p.$on ? '#000' : '#7d7f84')};
  input {
    appearance: none;
    margin: 0;
    width: 20px;
    height: 20px;
    background: #fff;
    border: 1px solid #c4c4c4;
  }
  input:checked::before {
    content: '';
    display: block;
    height: 18px;
    background: #c8c8c8;
    clip-path: polygon(2px 10px, 4px 8px, 7px 12px, 14px 3px, 15px 5px, 7px 15px);
  }
  input[data-fill='off'] { background: #c9c9c9; }
  input[data-fill='on'] { width: 18px; height: 18px; background: #919191; border: 1px solid #0b5a9d; outline: 1px solid #cfe3f5; outline-offset: -2px; }
`;

const StatusBar = styled.footer`
  display: flex;
  height: 22px;
  border-top: 1px solid ${LINE};
  font-size: 15px;
  line-height: 21px;
`;

const StatusCell = styled.button`
  width: ${(p) => p.$w}px;
  flex: none;
  display: flex;
  align-items: center;
  gap: 2px;
  justify-content: ${(p) => (p.$left ? 'flex-start' : 'center')};
  padding: 0 3px;
  border-right: 1px solid ${LINE};
  white-space: nowrap;
  ${(p) => p.$active && 'background: #e5f3fd; font-weight: 700;'}
`;

const StatusRest = styled.span`
  flex: 1;
  padding-left: 3px;
  margin-right: 4px;
  border-right: 1px solid ${LINE};
`;

const ColorBox = styled.i`
  width: 16px;
  height: 16px;
  background: #000;
`;

/* ---------- task bar ---------- */

const TaskBar = styled.footer`
  height: 50px;
  display: flex;
  background: #2c2d2f;
  color: #fff;
  font: 15px/22px ${UI_FONT};
`;

const TaskButton = styled.button`
  flex: none;
  width: ${(p) => p.$w || 62}px;
  height: 50px;
  display: grid;
  place-items: center;
  background: ${(p) => (p.$active ? '#5b5c5e' : 'transparent')};
  box-shadow: ${(p) => (p.$running ? 'inset 0 -3px #76b9ed' : 'none')};
  ${(p) => p.$running && !p.$active && 'width: 52px; margin: 0 5px;'}
`;

const Search = styled.label`
  width: 431px;
  display: flex;
  align-items: center;
  background: #333;
  padding: 0 18px 0 10px;
  gap: 11px;
  input {
    flex: 1;
    border: 0;
    outline: 0;
    padding: 0;
    background: none;
    font-size: 16px;
    &::placeholder { color: #a6a6a6; opacity: 1; }
  }
`;

const Tray = styled.div`
  display: flex;
  margin-left: auto;
  align-items: center;
`;

const Avatar = styled.span`
  width: 33px;
  height: 33px;
  border-radius: 50%;
  background: #a9a9a9;
  color: #2b2b2b;
  font-size: 14px;
  line-height: 33px;
`;

const Clock = styled.time`
  width: 92px;
  text-align: center;
`;

/* ---------- data ---------- */

const menus = ['File', 'Edit', 'View', 'Curve', 'Surface', 'Solid', 'Mesh', 'Dimension', 'Transform', 'Tools', 'Analyze', 'Render', 'Panels', 'T-Splines', 'Help'];

const toolTabs = ['Standard', 'CPlanes', 'Set View', 'Display', 'Select', 'Viewport Layout', 'Visibility', 'Transform', 'Curve Tools', 'Surface Tools', 'Solid Tools', 'Mesh Tools', 'Render Tools', 'Drafting', 'New in V5'];

// a trailing * marks a button that opens a fly-out
const standardTools = 'new open save* print note cut copy paste undo* hand orbit zoom zoomWin zoomExt zoomSel undoView* views* car* cplane* circleTool* shapes* bulb* lock* layers* wheel* sphere sphereGrid* blueSphere* spot* gearGold* dims* help*'.split(' ');
const shortTools = 'bendL slice wallDims'.split(' ');
const splineTools = 'power cylBox subd* tri extrude bbox curl ypipe swap quads bendL arch bend flat insert insertEdge slice crease uncrease extrude check fourBox weld remove flame flame bridge chair merge dotGrid* quarter gearQuad arrowPts symm checker spherePts tStar penta arrowsUp patch mesh mesh2 pinch gem gearPink'.split(' ');
const sideTools = 'cursor point* polyline* curve* circle* ellipse* arc* rect* polygon* fillet* srfPts* srfBend* box* balls* tube* meshBlue* puzzle explode trim split rings* ringsApart curvePt curveEdit* text scale* blocks rotate boolean* arrowsBlue* array* align* flip* tick* solids* pyramid*'.split(' ');

const tsGroups = [
  [['redPower', true], ['axes'], ['globe'], ['joints']],
  [['star', true], ['cage1'], ['cage2'], ['cage3'], ['cage4', false, true]],
  [['brush', true], ['grayQuad', true], ['boxX', true], ['gearPink', true]],
];

const layers = ['Default', 'Trial 1', 'Trial 2', 'Type 1', 'Type 2', 'Type 3', 'type 4', 'Layer 01', 'Layer 03', 'Layer 05', 'Layer 06', 'Layer 07', 'Type 5', 'Type6', 'Type 7', 'Type 8', 'Layer 02', 'Layer 04', 'Nature', '0', 'Make2D$...'];

const snaps = ['End', 'Near', 'Point', 'Mid', 'Cen', 'Int', 'Perp', 'Tan', 'Quad', 'Knot', 'Vertex'];

/* ---------- model view ---------- */

// plane (u, v in -1..1) to view coordinates
const project = (u, v) => {
  const g = -0.387;
  const h = 0.403;
  const d = 1 + g * u + h * v;
  return [
    (908 + g * -832 * u + h * 2492 * v) / d,
    (839 + g * -213 * u + h * -289 * v) / d,
  ];
};

const gridPath = (count, step) => {
  let d = '';
  for (let i = -count; i <= count; i += step) {
    const t = i / count;
    [[[t, -1], [t, 1]], [[-1, t], [1, t]]].forEach(([a, b]) => {
      const p = project(...a);
      const q = project(...b);
      d += `M${p[0].toFixed(1)} ${p[1].toFixed(1)}L${q[0].toFixed(1)} ${q[1].toFixed(1)}`;
    });
  }
  return d;
};

const ground = [[-1, -1], [-1, 1], [1, 1], [1, -1]].map(([u, v]) => project(u, v).join(',')).join(' ');

const discTicks = 'M162 102L182 110 M272 78L282 88 M402 74L395 84 M518 94L498 101 M84 149L118 153 M78 203L116 198 M150 258Q152 244 172 240 M272 286Q272 266 284 260 M420 280Q420 262 406 257';
const ringTicks = 'M198 848L219 859 M302 818L310 829 M420 814L413 826 M524 838L503 850 M568 898L580 890 M132 906L163 910 M126 974L161 969 M196 1036Q196 1026 216 1020 M304 1076L312 1046 M436 1070L428 1044';
const bandTicks = 'M574 285L630 300 M640 410L698 443 M695 565L742 610 M716 758L748 795 M706 872L728 908 M682 962L696 1000 M611 1046L620 1094 M560 1102L561 1134';
const backTicks = 'M624 173L672 175 M712 278L765 290 M794 411L842 439 M824 600L862 626 M814 718L844 754 M785 824L802 862';

const Model = () => (
  <g transform="translate(780 320) scale(.33333)" stroke="#000" strokeWidth="5" strokeLinejoin="round">
    <linearGradient id="band" x1="0" y1="0" x2="0" y2="1">
      <stop offset="0" stopColor="#7b7977" />
      <stop offset=".6" stopColor="#706f6e" />
      <stop offset="1" stopColor="#747272" />
    </linearGradient>
    <path d="M71 172V190A272 104 0 0 0 343 292A272 104 0 0 0 538 258V240L343 200Z" fill="#b4b4b2" />
    <path d="M585 124A272 104 0 0 0 343 70A272 104 0 0 0 71 174A272 102 0 0 0 343 276A272 104 0 0 0 538 242L483 218L530 172Z" fill="#737476" />
    <path d="M325 165Q326 160 335 160H350Q358 164 356 170Q352 175 340 174Q326 173 325 165Z" fill="#aaa" />
    <path d={discTicks} fill="none" strokeWidth="8" strokeLinecap="round" />

    <path d="M122 938V953A244 130 0 0 0 366 1081A244 130 0 0 0 543 1041V1028A244 130 0 0 1 366 1068A244 130 0 0 1 122 938Z" fill="#b4b4b2" />
    <path d="M585 880A244 130 0 0 0 366 808A244 130 0 0 0 122 938A244 130 0 0 0 366 1068A244 130 0 0 0 543 1028L498 997ZM193 937A172 90 0 0 1 537 937A172 90 0 0 1 193 937Z" fillRule="evenodd" fill="#767778" />
    <path d="M193 937A172 90 0 0 1 537 937L533 925A172 80 0 0 0 198 928Z" fill="#b5b5b2" />
    <path d={ringTicks} fill="none" strokeWidth="8" strokeLinecap="round" />

    <path d="M532 178Q524 148 540 140Q570 126 612 127Q650 135 680 178C760 255 830 390 845 440C880 600 862 690 842 765C815 860 770 930 690 1010L600 500Z" fill="#8c8b8a" />
    <path d={backTicks} fill="none" strokeWidth="10" strokeLinecap="round" />
    <path d="M568 187H604Q604 205 588 216" fill="#999" />
    <path d="M483 218V184Q500 172 545 176C600 200 620 300 700 445C745 540 752 640 752 740C745 870 722 950 692 1008C650 1070 610 1125 565 1138L515 1050L543 1037V1026L498 997C560 950 580 900 592 860C612 800 617 740 617 680C612 540 580 450 530 362Q500 320 488 298V272Q520 266 538 254V240Z" fill="url(#band)" />
    <path d="M545 176C600 200 620 300 700 445C745 540 752 640 752 740C745 870 722 950 692 1008" fill="none" strokeWidth="9" />
    <path d={bandTicks} fill="none" strokeWidth="10" strokeLinecap="round" />
  </g>
);

const Scene = () => (
  <svg viewBox="115 252 1603 687" preserveAspectRatio="xMidYMid slice" role="img" aria-label="Perspective">
    <polygon points={ground} fill="#969da5" />
    <path d={gridPath(100, 1)} stroke="#828a94" strokeWidth=".9" fill="none" opacity=".65" />
    <path d={gridPath(100, 5)} stroke="#7b838c" strokeWidth=".8" fill="none" opacity=".3" />
    <path d="M908 839L1363 515" stroke="#4a9a4e" strokeWidth="1.6" />
    <path d="M908 839L1073 940" stroke="#9a4448" strokeWidth="1.6" />
    <Model />
    <path d="M152 875V902L173 890M152 902L173 912" stroke="#6a6f75" strokeWidth="1.4" fill="none" />
    <g fill="#5d6268" fontSize="14" fontFamily="Liberation Sans, sans-serif">
      <text x="154" y="879">z</text>
      <text x="174" y="893">y</text>
      <text x="176" y="915">x</text>
    </g>
  </svg>
);

/* ---------- small pieces ---------- */

const Caret = ({ dir, solid }) => {
  const turn = { up: 0, right: 90, down: 180, left: 270 }[dir];
  return (
    <svg width="10" height="10" viewBox="0 0 10 10" aria-hidden="true">
      <path d="M1 7L5 3L9 7" fill={solid ? '#000' : 'none'} stroke={solid ? 'none' : '#555'} strokeWidth="2" transform={`rotate(${turn} 5 5)`} />
    </svg>
  );
};

const Cog = () => (
  <svg width="14" height="18" viewBox="0 -2 14 18" fill="none" stroke="#8a8d94" aria-hidden="true">
    <circle cx="7" cy="7" r="6" strokeDasharray="2.500 1.200" strokeWidth="1.500" />
    <circle cx="7" cy="7" r="4.500" />
    <circle cx="7" cy="7" r="1.200" />
  </svg>
);

const Rhino = ({ size }) => (
  <svg width={size} height={size} viewBox="0 0 24 24" aria-hidden="true">
    <rect width="24" height="24" fill="#151515" stroke="#000" />
    <path d="M2 1H10L8 6L11 9L14 9L20 4L18 9L21 13L22 19L17 23L13 19L12 15L6 14L1 9L4 6Z" fill="#ddd" />
    <path d="M12 1H22L19 5L13 8Z" fill="#888" />
    <path d="M1 14L5 15L3 22L1 20Z" fill="#aaa" />
    <path d="M10 12L13 14" stroke="#b66" />
  </svg>
);

const Tools = ({ names }) => names.map((n, i) => {
  const name = n.replace('*', '');
  return (
    <ToolButton key={i} type="button" aria-label={name} $flyout={n.endsWith('*')}>
      <Glyph name={name} />
    </ToolButton>
  );
});

const Bulb = ({ on, ring }) => (
  <svg width="12" height="14" viewBox="0 0 12 14" aria-hidden="true">
    <path d="M4 9Q1 7 2 4Q3 1 6 1Q9 1 10 4Q11 7 8 9V12H4Z" fill={on ? '#ffff9a' : '#3f95dc'} stroke={ring ? '#fff' : on ? '#8a8a20' : '#1d5d94'} />
    <path d="M5 10H7V13H5Z" fill="#fff" stroke="#333" strokeWidth=".600" />
  </svg>
);

const Padlock = ({ open, ring }) => (
  <svg width="14" height="14" viewBox="0 0 14 14" aria-hidden="true">
    {open
      ? <><path d="M8 7V4Q10 0 12 4" fill="none" stroke="#000" /><rect x="2" y="7" width="8" height="6" fill="#fff" stroke="#000" strokeWidth="1.300" /></>
      : <><path d="M4 7V4Q7 -1 10 4V7" fill="none" stroke={ring ? '#fff' : '#000'} strokeWidth="1.300" /><rect x="3" y="7" width="8" height="6" fill="#3f95dc" stroke={ring ? '#fff' : '#000'} strokeWidth="1.300" /></>}
  </svg>
);

const Layers = () => (
  <LayerBox>
    <LayerTable>
      <colgroup>
        <Col $w={79} />
        <Col $w={17} />
        <Col $w={17} />
        <Col $w={17} />
        <Col $w={17} />
        <col />
      </colgroup>
      <thead>
        <tr><th>Name</th><th /><th /><th /><th /><th>Materi</th></tr>
      </thead>
      <tbody>
        {layers.map((name) => {
          const current = name === 'Nature';
          const selected = name.startsWith('Make2D');
          const first = name === 'Default';
          return (
            <LayerRow key={name} $current={current} $selected={selected}>
              <td>{name}</td>
              <td>{current && <svg width="12" height="12" viewBox="0 0 12 12"><path d="M2 6L5 9L10 2" fill="none" stroke="#000" strokeWidth="2" /></svg>}</td>
              <td>{!current && <Bulb on={first} ring={selected} />}</td>
              <td>{!current && <Padlock open={first} ring={selected} />}</td>
              <td><Swatch $outlined={selected} /></td>
              <td><Ball /></td>
            </LayerRow>
          );
        })}
      </tbody>
    </LayerTable>
    <ScrollBar>
      <button type="button" aria-label="Scroll left"><Caret dir="left" /></button>
      <Thumb />
      <Spacer />
      <button type="button" aria-label="Scroll right"><Caret dir="right" /></button>
    </ScrollBar>
  </LayerBox>
);

const taskIcons = {
  start: <svg width="22" height="22" viewBox="0 0 22 22"><path d="M1 4L10 2.500V10.500H1ZM11 2.300L21 1V10.500H11ZM1 11.500H10V19.500L1 18ZM11 11.500H21V21L11 19.700Z" fill="#fff" /></svg>,
  taskView: <svg width="22" height="22" viewBox="0 0 22 22" fill="none" stroke="#fff" strokeWidth="1.400"><path d="M2 1V4H15V1M2 21V18H15V21M2 7H15V15H2ZM19.500 1V6M19.500 13V21" /><path d="M18 8H21V11H18Z" fill="#fff" /></svg>,
  sticky: <svg width="24" height="24" viewBox="0 0 24 24"><path d="M0 0H24V13L13 24H0Z" fill="#ffe600" /><path d="M13 24V13H24Z" fill="#333" /><path d="M14 24H24V14Z" fill="#ffe600" /></svg>,
  store: <svg width="28" height="30" viewBox="0 0 28 30"><path d="M9 9V5Q14 -2 19 5V9" fill="none" stroke="#ddd" strokeWidth="1.800" /><path d="M0 8H28V29H0Z" fill="#fff" /><path d="M7 13H13V18H7Z" fill="#f25022" /><path d="M14 13H20V18H14Z" fill="#7fba00" /><path d="M7 19H13V24H7Z" fill="#00a4ef" /><path d="M14 19H20V24H14Z" fill="#ffb900" /></svg>,
  explorer: <svg width="28" height="26" viewBox="0 0 28 26"><path d="M0 1H11L13 4H28V24H0Z" fill="#fddc78" /><path d="M1 5H27V23H1Z" fill="#ffe9a2" /><path d="M0 1H11L12 4H0Z" fill="#f3b93a" /><path d="M5 25V13H23V25H18V19H10V25Z" fill="#45b1e0" /></svg>,
  whatsapp: <svg width="28" height="28" viewBox="0 0 28 28"><path d="M2 26L4 19.500A11.500 11.500 0 1 1 8.500 24Z" fill="#2cb742" stroke="#fff" strokeWidth="2" /><path d="M9 8Q11 6 12 9Q13 11 11.500 12Q13 15.500 16.500 17Q18 15 19 16.500Q22 17.500 20 19.500Q17 21.500 12 17.500Q7.500 13 9 8Z" fill="#fff" /></svg>,
  mail: <svg width="30" height="24" viewBox="0 0 30 24"><path d="M0 8L15 0L30 8V24H0Z" fill="#fff" /><path d="M3 8H27L19 13L24 19L14 13Z" fill="#2c2d2f" /></svg>,
  chrome: <svg width="28" height="28" viewBox="0 0 28 28"><path d="M14 14L2 7A14 14 0 0 1 26.500 8H14Z" fill="#db4437" /><path d="M14 14L26.500 8A14 14 0 0 1 13 28L19 17Z" fill="#ffcd40" /><path d="M14 14L19 17L13 28A14 14 0 0 1 2 7L9 17Z" fill="#0f9d58" /><circle cx="14" cy="14" r="6.500" fill="#fff" /><circle cx="14" cy="14" r="5.200" fill="#4285f4" /></svg>,
  photos: <svg width="27" height="27" viewBox="0 0 27 27"><path d="M1 1H26V26H1Z" fill="none" stroke="#fff" strokeWidth="1.500" /><path d="M2 24V20L10 7L16 16L19 12L25 21V24Z" fill="#fff" /></svg>,
};

const App = () => {
  const [activeTab, setActiveTab] = useState('Standard');
  const [view, setView] = useState('Perspective');

  return (
    <>
      <GlobalStyle />
      <Desktop>
        <Window>
          <TitleBar>
            <Rhino size={20} />
            <h1>Lamp.3dm (13228 KB) - Rhinoceros Corporate (64-bit) - [Perspective]</h1>
            <CaptionButton type="button" aria-label="Minimize"><svg width="12" height="12"><path d="M0 6H12" stroke="#fff" /></svg></CaptionButton>
            <CaptionButton type="button" aria-label="Restore"><svg width="13" height="13" fill="none" stroke="#fff"><path d="M1 3H10V12H1ZM3 3V1H12V10H10" /></svg></CaptionButton>
            <CaptionButton type="button" aria-label="Close"><svg width="13" height="13"><path d="M1 1L12 12M12 1L1 12" stroke="#fff" strokeWidth="1.200" /></svg></CaptionButton>
          </TitleBar>
          <MenuBar>
            {menus.map((m) => <button key={m} type="button">{m}</button>)}
          </MenuBar>

          <CommandBar>
            <Grip />
            <CommandText>
              <History>
                <p>{'1 extrusion added to selection.\nCommand: _Hide'}</p>
                <ScrollButtons>
                  <button type="button" aria-label="Older"><Caret dir="up" /></button>
                  <button type="button" aria-label="Newer"><Caret dir="down" /></button>
                </ScrollButtons>
              </History>
              <Prompt>
                <label htmlFor="command">Command:</label>
                <input id="command" type="text" autoComplete="off" />
                <ScrollButtons $boxed>
                  <button type="button" aria-label="Previous"><Caret dir="up" solid /></button>
                  <button type="button" aria-label="Next"><Caret dir="down" solid /></button>
                </ScrollButtons>
              </Prompt>
            </CommandText>
          </CommandBar>

          <ToolTabs>
            {toolTabs.map((t) => (
              <ToolTab key={t} type="button" $roomy={t.endsWith('Tools')} $active={t === activeTab} onClick={() => setActiveTab(t)}>{t}</ToolTab>
            ))}
            <Spacer />
            <Cog />
          </ToolTabs>
          <ToolRow $height={34}><Grip /><Tools names={standardTools} /></ToolRow>
          <ToolRow><Grip /><Tools names={shortTools} /></ToolRow>
          <ToolRow><Grip /><Tools names={splineTools} /></ToolRow>

          <Work>
            <SideBar>
              <Grip $flat />
              <SideGrid><Tools names={sideTools} /></SideGrid>
            </SideBar>
            <TsBar>
              <Grip $flat />
              {tsGroups.map((group, i) => (
                <TsGroup key={i}>
                  {group.map(([name, wide, active]) => (
                    <TsButton key={name} type="button" aria-label={name} $wide={wide} $active={active}>
                      <Glyph name={name} size={22} />
                    </TsButton>
                  ))}
                </TsGroup>
              ))}
            </TsBar>
            <Center>
              <Viewport>
                <Scene />
                <ViewportTitle type="button">
                  <span>{view}</span>
                  <Caret dir="down" solid />
                </ViewportTitle>
              </Viewport>
              <ViewTabs>
                {['Perspective', 'Top', 'Front', 'Right'].map((v) => (
                  <ViewTab key={v} type="button" $active={v === view} onClick={() => setView(v)}>{v}</ViewTab>
                ))}
                <ViewTab type="button" $plain aria-label="New view">
                  <svg width="14" height="10" viewBox="0 0 14 10"><path d="M6 1H9V4H12V7H9V10H6V7H3V4H6Z" fill="none" stroke="#555" /></svg>
                </ViewTab>
              </ViewTabs>
            </Center>
            <Panel>
              <Grip $flat />
              <PanelTabs>
                <PanelTab type="button"><Glyph name="wheel" size={16} />P...</PanelTab>
                <PanelTab type="button" $active><Glyph name="layers" size={18} />L...</PanelTab>
                <PanelTab type="button"><Glyph name="monitor" size={16} />D...</PanelTab>
                <PanelTab type="button"><Glyph name="helpBox" size={16} />H...</PanelTab>
                <Spacer />
                <Cog />
              </PanelTabs>
              <PanelTools>
                {['new', 'copy', 'cross', 'up', 'down', 'left', 'funnel'].map((n) => (
                  <ToolButton key={n} type="button" aria-label={n} $small><Glyph name={n} size={15} /></ToolButton>
                ))}
              </PanelTools>
              <Layers />
            </Panel>
          </Work>

          <SnapBar>
            <Grip />
            <SnapList>
              {snaps.map((s) => (
                <Snap key={s}><input type="checkbox" defaultChecked />{s}</Snap>
              ))}
              <Snap><input type="checkbox" data-fill="off" />Project</Snap>
              <Snap $on><input type="checkbox" data-fill="on" />Disable</Snap>
            </SnapList>
          </SnapBar>

          <StatusBar>
            <StatusCell $w={68}>CPlane</StatusCell>
            <StatusCell $w={88}>x 657.34</StatusCell>
            <StatusCell $w={88}>y 445.59</StatusCell>
            <StatusCell $w={88}>z 0.00</StatusCell>
            <StatusCell $w={88}>Millimeters</StatusCell>
            <StatusCell $w={173} $left><ColorBox />Nature</StatusCell>
            <StatusCell $w={91}>Grid Snap</StatusCell>
            <StatusCell $w={58}>Ortho</StatusCell>
            <StatusCell $w={64} $active>Planar</StatusCell>
            <StatusCell $w={64}>Osnap</StatusCell>
            <StatusCell $w={105}>SmartTrack</StatusCell>
            <StatusCell $w={77}>Gumball</StatusCell>
            <StatusCell $w={131}>Record History</StatusCell>
            <StatusCell $w={53}>Filter</StatusCell>
            <StatusRest>CPU use: 1.5 %</StatusRest>
          </StatusBar>
        </Window>

        <TaskBar>
          <TaskButton type="button" $w={60} aria-label="Start">{taskIcons.start}</TaskButton>
          <Search>
            <svg width="28" height="28"><circle cx="14" cy="14" r="12" fill="none" stroke="#fff" strokeWidth="3" /></svg>
            <input type="search" placeholder="Type here to search" />
            <svg width="16" height="22" viewBox="0 0 16 22" fill="none" stroke="#aaa" strokeWidth="1.400"><rect x="5" y="1" width="6" height="13" rx="1" /><path d="M1 10V14Q1 17 4 17H12Q15 17 15 14V10M8 17V21M5 21H11" /></svg>
          </Search>
          <TaskButton type="button" aria-label="Task View">{taskIcons.taskView}</TaskButton>
          <TaskButton type="button" aria-label="Sticky Notes">{taskIcons.sticky}</TaskButton>
          <TaskButton type="button" aria-label="Store">{taskIcons.store}</TaskButton>
          <TaskButton type="button" $running aria-label="Explorer">{taskIcons.explorer}</TaskButton>
          <TaskButton type="button" aria-label="WhatsApp">{taskIcons.whatsapp}</TaskButton>
          <TaskButton type="button" aria-label="Mail">{taskIcons.mail}</TaskButton>
          <TaskButton type="button" $running aria-label="Chrome">{taskIcons.chrome}</TaskButton>
          <TaskButton type="button" $running aria-label="Photos">{taskIcons.photos}</TaskButton>
          <TaskButton type="button" $running $active aria-label="Rhinoceros"><Rhino size={30} /></TaskButton>
          <Tray>
            <TaskButton type="button" $w={48} aria-label="Help">
              <svg width="28" height="28" viewBox="0 0 28 28"><circle cx="14" cy="14" r="12" fill="#0096d6" stroke="#fff" strokeWidth="2.500" /><text x="14" y="21" textAnchor="middle" fill="#fff" fontSize="20" fontWeight="700">?</text></svg>
            </TaskButton>
            <TaskButton type="button" $w={60}><Avatar>RC</Avatar></TaskButton>
            <TaskButton type="button" $w={60}><Avatar>PC</Avatar></TaskButton>
            <TaskButton type="button" $w={60} aria-label="People">
              <svg width="20" height="20" viewBox="0 0 20 20" fill="none" stroke="#fff" strokeWidth="1.500"><circle cx="13" cy="5" r="3.500" /><circle cx="6" cy="10" r="3" /><path d="M1 19Q2 13 6 13Q10 13 11 19M10 11Q12 8 14 9Q18 9 19 14" /></svg>
            </TaskButton>
            <TaskButton type="button" $w={30} aria-label="Hidden icons"><svg width="16" height="10" fill="none" stroke="#fff" strokeWidth="1.500"><path d="M1 9L8 2L15 9" /></svg></TaskButton>
            <TaskButton type="button" $w={30} aria-label="Battery"><svg width="20" height="14" fill="#fff" stroke="#fff"><rect x="5" y="4" width="13" height="8" /><path d="M19 6V10M1 1V5H4V1M3 5V9" fill="none" /></svg></TaskButton>
            <TaskButton type="button" $w={30} aria-label="Volume"><svg width="20" height="16" fill="none" stroke="#fff" strokeWidth="1.200"><path d="M1 6H4L8 2V14L4 10H1ZM11 6Q12 8 11 10" /><path d="M14 4Q16 8 14 12M16 2Q20 8 16 14" stroke="#888" /></svg></TaskButton>
            <TaskButton type="button" $w={34} aria-label="Network"><svg width="18" height="18" fill="none" stroke="#ccc" strokeWidth="1.400"><path d="M2 16Q2 3 16 3M6 16Q6 7 16 7M10 16Q10 11 16 11" /><circle cx="14" cy="15" r="1.500" fill="#fff" /></svg></TaskButton>
            <TaskButton type="button" $w={37} aria-label="Pen"><svg width="20" height="20" fill="none" stroke="#fff" strokeWidth="1.400"><path d="M5 15L12 2L16 3L9 17L5 18ZM5 11Q0 13 2 17Q8 20 12 13Q16 8 19 12" /></svg></TaskButton>
            <TaskButton type="button" $w={46}>ENG</TaskButton>
            <Clock>03:03 PM<br />29-01-2019</Clock>
            <TaskButton type="button" $w={64} aria-label="Notifications"><svg width="22" height="22" fill="none" stroke="#fff" strokeWidth="1.400"><path d="M1 1H20V17H14L11 20L8 17H1Z" /></svg></TaskButton>
          </Tray>
        </TaskBar>
      </Desktop>
    </>
  );
};

export default App;
